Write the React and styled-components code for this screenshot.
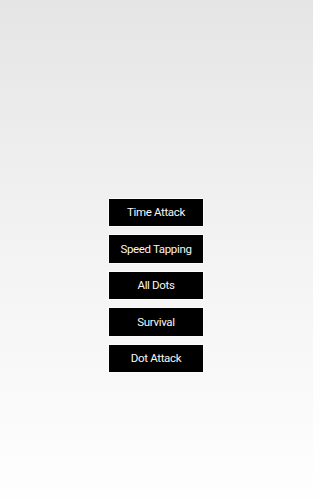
import styled, { createGlobalStyle } from "styled-components";

const GlobalStyle = createGlobalStyle`
  html, body {
    margin: 0;
    padding: 0;
  }
  body {
    font-family: Roboto, "Liberation Sans", sans-serif;
    background: #fefefe;
  }
`;

const Screen = styled.div`
  width: 313px;
  min-height: 100vh;
  background: linear-gradient(to bottom, #e5e5e5 0%, #f3f3f3 50%, #fefefe 100%);
  display: flex;
  flex-direction: column;
  align-items: center;
  padding-top: 199px;
  box-sizing: border-box;
`;

const Menu = styled.div`
  display: flex;
  flex-direction: column;
  gap: 9.2px;
  margin-left: -1px;
`;

const ModeButton = styled.button`
  width: 94px;
  height: 27.3px;
  margin: 0;
  padding: 0 0 1px;
  border: none;
  background: #000;
  color: #f6f6f6;
  font-family: Roboto, "Liberation Sans", sans-serif;
  font-size: 11.5px;
  letter-spacing: -0.35px;
  box-shadow: 0 0 0 1px #fbfbfb;
  cursor: pointer;
`;

const modes = ["Time Attack", "Speed Tapping", "All Dots", "Survival", "Dot Attack"];

export default function App() {
  return (
    <>
      <GlobalStyle />
      <Screen>
        <Menu>
          {modes.map((m) => (
            <ModeButton key={m}>{m}</ModeButton>
          ))}
        </Menu>
      </Screen>
    </>
  );
}
